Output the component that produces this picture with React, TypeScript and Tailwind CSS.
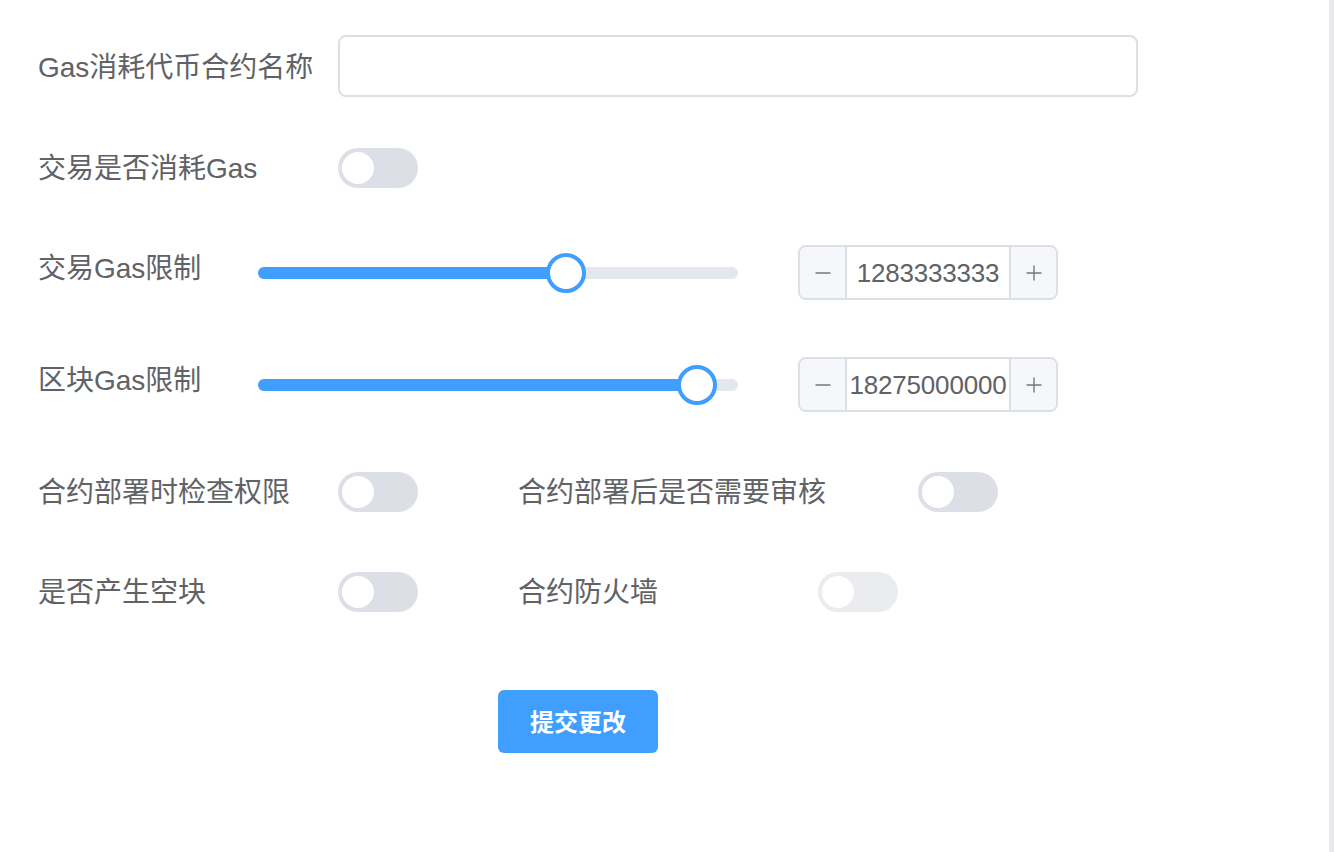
import React from "react";

const FONT = { fontFamily: '"Liberation Sans", "Noto Sans CJK SC", sans-serif' };

function Switch({ disabled = false }: { disabled?: boolean }) {
  return (
    <div
      className={`w-[80px] h-[40px] rounded-full flex items-center px-[4px] shrink-0 ${
        disabled ? "bg-[#eaecf0]" : "bg-[#dcdfe6]"
      }`}
    >
      <div className="w-[32px] h-[32px] rounded-full bg-white" />
    </div>
  );
}

function Slider({ pct }: { pct: number }) {
  return (
    <div className="relative w-[480px] h-[12px] rounded-full bg-[#e4e7ed]">
      <div className="h-full rounded-full bg-[#409eff]" style={{ width: `${pct}%` }} />
      <div
        className="absolute top-1/2 w-[40px] h-[40px] -translate-x-1/2 -translate-y-1/2 rounded-full bg-white border-[4px] border-[#409eff]"
        style={{ left: `${pct}%` }}
      />
    </div>
  );
}

function Minus() {
  return (
    <svg width="16" height="16" viewBox="0 0 16 16">
      <line x1="0.5" y1="8" x2="15.5" y2="8" stroke="#74777d" strokeWidth="1.4" />
    </svg>
  );
}
function Plus() {
  return (
    <svg width="16" height="16" viewBox="0 0 16 16">
      <line x1="0.5" y1="8" x2="15.5" y2="8" stroke="#74777d" strokeWidth="1.4" />
      <line x1="8" y1="0.5" x2="8" y2="15.5" stroke="#74777d" strokeWidth="1.4" />
    </svg>
  );
}

function NumberInput({ value }: { value: string }) {
  return (
    <div className="w-[260px] h-[55px] flex border-2 border-[#dcdfe6] rounded-[8px] overflow-hidden">
      <div className="w-[47px] bg-[#f5f7fa] border-r-2 border-[#dcdfe6] flex items-center justify-center">
        <Minus />
      </div>
      <div className="flex-1 flex items-center justify-center pt-[2px] text-[26px] text-[#606266] bg-white overflow-hidden whitespace-nowrap tracking-[-0.2px]">
        {value}
      </div>
      <div className="w-[47px] bg-[#f5f7fa] border-l-2 border-[#dcdfe6] flex items-center justify-center">
        <Plus />
      </div>
    </div>
  );
}

export default function App() {
  return (
    <div className="w-[1334px] h-[852px] flex bg-white overflow-hidden" style={FONT}>
      <div className="flex-1 flex flex-col pl-[38px] text-[28px] text-[#606266]">
        {/* Row 1 */}
        <div className="mt-[35px] h-[62px] flex items-center">
          <div className="w-[300px] leading-none pt-[3px]">Gas消耗代币合约名称</div>
          <div className="w-[800px] h-[62px] border-2 border-[#dcdfe6] rounded-[8px] bg-white" />
        </div>
        {/* Row 2 */}
        <div className="mt-[51px] h-[40px] flex items-center">
          <div className="w-[300px] leading-none pt-[2px]">交易是否消耗Gas</div>
          <Switch />
        </div>
        {/* Row 3 */}
        <div className="mt-[57px] h-[55px] flex items-start">
          <div className="w-[220px] h-[44px] flex items-center leading-none pt-[3px]">交易Gas限制</div>
          <div className="w-[480px] h-[55px] flex items-center">
            <Slider pct={64.2} />
          </div>
          <div className="ml-[60px]">
            <NumberInput value="1283333333" />
          </div>
        </div>
        {/* Row 4 */}
        <div className="mt-[57px] h-[55px] flex items-start">
          <div className="w-[220px] h-[44px] flex items-center leading-none pt-[3px]">区块Gas限制</div>
          <div className="w-[480px] h-[55px] flex items-center">
            <Slider pct={91.5} />
          </div>
          <div className="ml-[60px]">
            <NumberInput value="18275000000" />
          </div>
        </div>
        {/* Row 5 */}
        <div className="mt-[60px] h-[40px] flex items-center">
          <div className="w-[300px] leading-none pt-[2px]">合约部署时检查权限</div>
          <Switch />
          <div className="ml-[100px] w-[400px] leading-none pt-[2px]">合约部署后是否需要审核</div>
          <Switch />
        </div>
        {/* Row 6 */}
        <div className="mt-[60px] h-[40px] flex items-center">
          <div className="w-[300px] leading-none pt-[2px]">是否产生空块</div>
          <Switch />
          <div className="ml-[100px] w-[300px] leading-none pt-[2px]">合约防火墙</div>
          <Switch disabled />
        </div>
        {/* Submit */}
        <div className="mt-[78px] pl-[460px]">
          <button className="w-[160px] h-[63px] rounded-[6px] bg-[#409eff] text-white text-[24px] font-bold flex items-center justify-center pt-[2px]">
            提交更改
          </button>
        </div>
      </div>
      <div className="w-[5px] h-full bg-[#e9e9eb]" />
    </div>
  );
}
